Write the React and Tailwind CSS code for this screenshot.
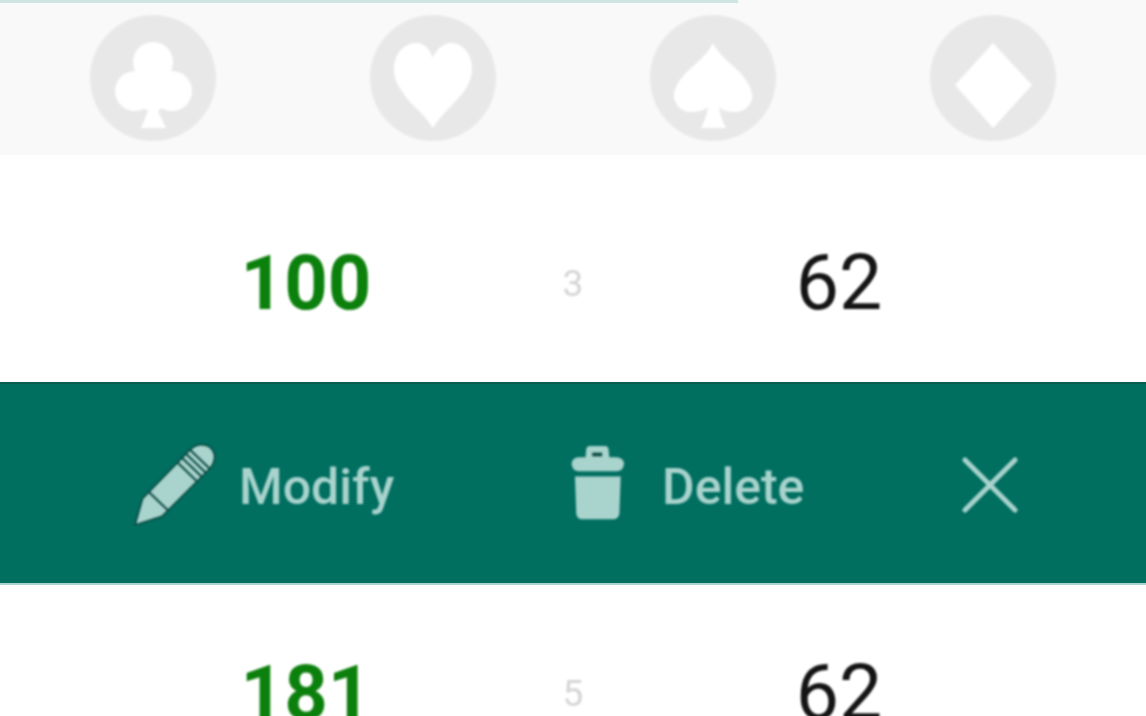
const FONT = "font-['Roboto','Liberation_Sans',sans-serif]";

function SuitCircle({ children }) {
  return (
    <div className="flex justify-center">
      <div className="h-[126px] w-[126px] rounded-full bg-[#e8e8e8] blur-[1px]">
        <svg viewBox="0 0 126 126" className="h-[126px] w-[126px]" fill="#ffffff">
          {children}
        </svg>
      </div>
    </div>
  );
}

function Pencil() {
  return (
    <svg viewBox="90 60 261 270" className="h-[90px] w-[87px] shrink-0">
      <path
        d="M105 312 L128 232 L268 88 Q296 62 326 76 Q352 94 340 126 Q336 136 328 144 L186 286 Z"
        fill="#a9d3cd"
        stroke="#0a4a42"
        strokeWidth="5"
        strokeLinejoin="round"
      />
      <path
        d="M146 212 L206 270 M232 124 L292 182 M246 110 L306 168 M258 98 L318 156 M270 86 L330 144"
        stroke="#0a4a42"
        strokeWidth="6"
        fill="none"
      />
    </svg>
  );
}

function Trash() {
  return (
    <svg viewBox="90 65 175 245" className="mb-[6px] h-[82px] w-[58px] shrink-0">
      <path d="M140 112 L142 84 Q144 76 152 76 L198 76 Q208 76 209 84 L212 112 Z" fill="#a9d3cd" />
      <rect x="160" y="96" width="30" height="11" fill="#0a4a42" />
      <path d="M98 128 Q100 112 120 110 L232 110 Q254 112 256 128 Q256 150 235 152 L118 152 Q98 150 98 128 Z" fill="#a9d3cd" />
      <path d="M108 168 L246 168 L242 280 Q240 296 222 297 L130 297 Q114 296 112 280 Z" fill="#a9d3cd" />
    </svg>
  );
}

function Close() {
  return (
    <svg viewBox="0 0 60 60" className="mb-[2px] h-[60px] w-[60px] shrink-0">
      <path d="M5 5 L55 55 M55 5 L5 55" stroke="#a9d3cd" strokeWidth="5" strokeLinecap="round" />
    </svg>
  );
}

function ScoreRow({ a, n, b, className }) {
  return (
    <div className={`flex items-center justify-center blur-[1px] ${className}`}>
      <div className="w-[267px] text-center text-[76px] font-bold leading-none text-[#0c800c]">{a}</div>
      <div className="w-[267px] text-center text-[37px] leading-none text-[#d4d4d4]">{n}</div>
      <div className="w-[267px] -translate-x-px text-center text-[77px] leading-none text-[#141414]">{b}</div>
    </div>
  );
}

export default function App() {
  return (
    <div className={`h-[716px] w-[1146px] overflow-hidden bg-white ${FONT}`}>
      <div className="h-[155px] bg-[#f9f9f9]">
        <div className="h-[3px] w-[738px] bg-[#cfe5e1]" />
        <div className="grid grid-cols-4 px-[13px] pt-3">
          <SuitCircle>
            <circle cx="63" cy="47" r="20" />
            <circle cx="45" cy="76" r="20" />
            <circle cx="82" cy="76" r="20" />
            <path d="M50 60 H76 V90 L68 96 L76 113 H51 L58 96 L50 90 Z" />
          </SuitCircle>
          <SuitCircle>
            <path d="M63 113 C54 98 40 90 31 75 C25 66 24 60 24 54 C24 38 35 28 46 28 C55 28 60 35 63 43 C66 35 72 28 81 28 C93 28 102 39 102 54 C102 62 99 68 95 75 C86 88 72 98 63 113 Z" />
          </SuitCircle>
          <SuitCircle>
            <path d="M63 28 C70 42 84 50 92 60 C100 69 103 78 102 84 C100 92 93 97 85 97 C78 97 71 95 69 92 C70 100 73 107 76 113 H51 C54 107 57 100 58 92 C55 95 48 97 41 97 C32 97 26 91 24 83 C23 76 27 68 34 60 C43 50 56 42 63 28 Z" />
          </SuitCircle>
          <SuitCircle>
            <path d="M63 28 L102 70 L63 113 L25 70 Z" />
          </SuitCircle>
        </div>
      </div>

      <ScoreRow a="100" n="3" b="62" className="h-[227px] pt-[29px]" />

      <div className="flex h-[203px] items-center border-t-2 border-b-2 border-t-[#0b5c50] border-b-[#a9d3cd] bg-[#006f60] pl-[130px] pt-[4px] text-[50px] font-medium leading-none text-[#a9d3cd]">
        <div className="flex items-center blur-[1px]">
          <Pencil />
          <span className="ml-[22px] mt-[2px] w-[155px]">Modify</span>
          <div className="ml-[175px] flex items-center">
            <Trash />
            <span className="ml-[35px] mt-[2px] w-[143px]">Delete</span>
          </div>
          <div className="ml-[155px]"><Close /></div>
        </div>
      </div>

      <ScoreRow a="181" n="5" b="62" className="h-[216px]" />
    </div>
  );
}
